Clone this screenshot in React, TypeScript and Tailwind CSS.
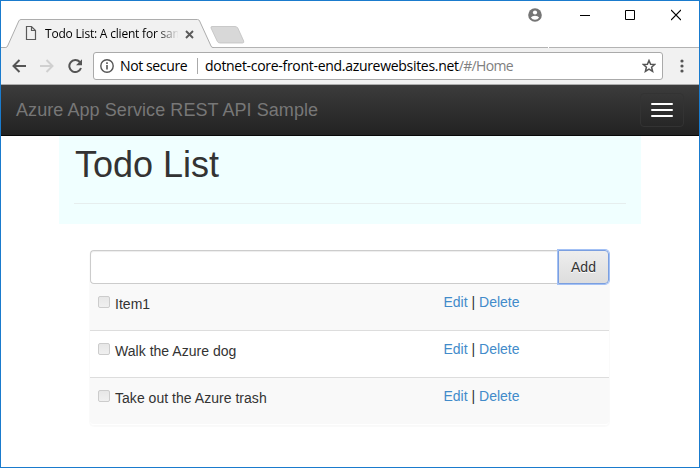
import React from "react";

const items = ["Item1", "Walk the Azure dog", "Take out the Azure trash"];

function TitleBar() {
  return (
    <div className="relative flex h-[47px] bg-white">
      <div className="absolute inset-x-0 bottom-0 h-px bg-[#b3b3b3]" />
      <div className="absolute bottom-0 left-[547px] h-px w-px bg-white" />
      <div className="relative mt-[17px] flex h-[30px] w-[213px] shrink-0 items-center">
        <svg className="absolute inset-0" width="213" height="30" viewBox="0 0 213 30">
          <path d="M0 29.5H4.5Q6 29.5 6.6 28L17.8 3Q18.5 1.5 20 1.5H196.5Q198 1.5 198.6 3L210 28Q210.5 29.5 212 29.5H213V30H0Z" fill="#f1f1f1" />
          <path d="M0 29.5H4.5Q6 29.5 6.6 28L17.8 3Q18.5 1.5 20 1.5H196.5Q198 1.5 198.6 3L210 28Q210.5 29.5 212 29.5H213" fill="none" stroke="#adadad" />
        </svg>
        <svg className="relative ml-[24px] shrink-0" width="12" height="16" viewBox="0 0 12 16" fill="none" stroke="#5a5a5a" strokeWidth="1.2">
          <path d="M1.5 1.5H6.5L10.5 5.5V14.5H1.5ZM6.5 1.5V5.5H10.5" />
        </svg>
        <span className="relative ml-2 mt-[2px] w-[133px] whitespace-nowrap font-['Open_Sans',sans-serif] text-[12px] leading-4 tracking-[-0.2px] text-black [mask-image:linear-gradient(to_right,black_112px,transparent_134px)]">
          Todo List: A client for sam
        </span>
        <svg className="relative ml-[7px] mt-[2px] shrink-0" width="9" height="9" viewBox="0 0 9 9" stroke="#5a5a5a" strokeWidth="1.9">
          <path d="M1 1L8 8M8 1L1 8" />
        </svg>
      </div>
      <svg className="mt-[24px] -ml-[5px] shrink-0" width="36" height="20" viewBox="0 0 36 20">
        <path d="M3 1.5H26Q28 1.5 28.8 3L34.7 16Q35.3 18 33.5 18H11Q9 18 8.2 16.2L2 3Q1.6 1.5 3 1.5Z" fill="#d8d8d8" stroke="#c0c0c0" strokeWidth=".8" />
      </svg>
      <div className="ml-auto flex pt-[7px]">
        <svg width="14" height="14" viewBox="0 0 14 14">
          <circle cx="7" cy="7" r="6.8" fill="#757575" />
          <circle cx="7" cy="4.5" r="2.1" fill="white" />
          <path d="M2.9 9.5Q4 7.8 7 7.8T11.1 9.5Q9.7 11.8 7 11.8T2.9 9.5" fill="white" />
        </svg>
        <svg className="ml-[38px]" width="10" height="14"><path d="M0 7.5H10" stroke="black" /></svg>
        <svg className="ml-[35px]" width="10" height="14"><path d="M.5 2.5H9.5V11.5H.5Z" fill="none" stroke="black" /></svg>
        <svg className="ml-[36px] mr-[18px]" width="10" height="14"><path d="M0 2L10 12M10 2L0 12" stroke="black" strokeWidth="1.2" /></svg>
      </div>
    </div>
  );
}

function Toolbar() {
  return (
    <div className="flex h-[37px] items-center border-b border-[#adadad] bg-[#f1f1f1] font-['Open_Sans',sans-serif]">
      <svg className="ml-[11px]" width="15" height="14" viewBox="0 0 15 14" fill="none" stroke="#555" strokeWidth="2"><path d="M14 7H1.5M7.5 1L1.5 7L7.5 13" /></svg>
      <svg className="ml-[13px]" width="15" height="14" viewBox="0 0 15 14" fill="none" stroke="#d0d0d0" strokeWidth="2"><path d="M0 7H12.5M6.5 1L12.5 7L6.5 13" /></svg>
      <svg className="ml-[13px]" width="15" height="14" viewBox="0 0 15 14"><path d="M11.8 3A6 6 0 1 0 13 9" fill="none" stroke="#555" strokeWidth="2" /><path d="M14 .2V6.2H8Z" fill="#555" /></svg>
      <div className="ml-[10px] flex h-[28px] w-[570px] items-center rounded-[3px] border border-[#aaa] bg-white text-[14px] leading-5 text-black">
        <svg className="ml-[6px]" width="14" height="14" viewBox="0 0 14 14" fill="none" stroke="#555"><circle cx="7" cy="7" r="6.2" strokeWidth="1.4" /><path d="M7 6V10.5M7 3.3V5" strokeWidth="1.6" /></svg>
        <span className="ml-[6px] w-[68px] whitespace-nowrap tracking-[-0.38px]">Not secure</span>
        <span className="ml-[9px] h-4 w-px bg-[#aaa]" />
        <span className="ml-[7px] whitespace-nowrap tracking-[-0.3px]">dotnet-core-front-end.azurewebsites.net<span className="tracking-[-0.65px] text-[#808080]">/#/Home</span></span>
        <svg className="ml-auto mr-[6px]" width="14" height="14" viewBox="0 0 14 14" fill="none" stroke="#555" strokeWidth="1.5"><path d="M7 1.5L8.6 5.2L12.7 5.5L9.6 8.2L10.6 12.3L7 10.1L3.4 12.3L4.4 8.2L1.3 5.5L5.4 5.2Z" /></svg>
      </div>
      <svg className="ml-[16.5px]" width="4" height="14" viewBox="0 0 4 14" fill="#555"><circle cx="2" cy="2" r="1.6" /><circle cx="2" cy="7" r="1.6" /><circle cx="2" cy="12" r="1.6" /></svg>
    </div>
  );
}

export default function App() {
  return (
    <div className="h-[468px] w-[700px] overflow-hidden border border-[#1a7bcd] bg-white font-['Liberation_Sans',Arial,sans-serif]">
      <TitleBar />
      <Toolbar />
      <nav className="flex h-[51px] items-center justify-between border-b border-[#080808] bg-linear-to-b from-[#3c3c3c] to-[#222] px-[15px]">
        <span className="text-[18px] leading-5 tracking-[0.07px] text-[#777]">Azure App Service REST API Sample</span>
        <button className="flex h-[34px] w-[44px] flex-col items-center justify-center gap-1 rounded-[4px] border border-[#333]">
          <span className="h-[2px] w-[22px] rounded-[1px] bg-white" />
          <span className="h-[2px] w-[22px] rounded-[1px] bg-white" />
          <span className="h-[2px] w-[22px] rounded-[1px] bg-white" />
        </button>
      </nav>
      <header className="ml-[58px] h-[88px] w-[582px] bg-[#f0ffff] px-[15px] pt-[9px]">
        <h1 className="h-[59px] border-b border-[#e6eeee] pl-px text-[36px] leading-[39.6px] font-normal text-[#333]">Todo List</h1>
      </header>
      <main className="mt-[26px] ml-[89px] w-[519px] rounded-[4px] text-[14px] leading-5 text-[#333] shadow-[0_1px_1px_1px_rgba(0,0,0,0.025)]">
        <div className="flex h-[34px]">
          <input className="min-w-0 flex-1 rounded-l-[4px] border border-r-0 border-[#ccc] bg-white shadow-[inset_0_1px_1px_rgba(0,0,0,0.075)] outline-none" />
          <button className="w-[51px] rounded-r-[4px] border border-[#7b9fe0] bg-linear-to-b from-[#eee] to-[#ddd] text-center shadow-[0_0_0_1px_#a3c1f5] [text-shadow:0_1px_0_#fff]">Add</button>
        </div>
        {items.map((item) => (
          <div key={item} className="flex h-[47px] items-start border-b border-[#ddd] px-2 pt-2 odd:bg-white even:bg-[#f9f9f9] last:rounded-b-[4px] last:border-white">
            <span className="mt-[4px] h-[12px] w-[12px] shrink-0 rounded-[2px] border border-[#ccc] bg-linear-to-b from-[#e7e7e7] to-[#f0f0f0]" />
            <span className="mt-[2px] ml-[5px] w-[328.5px] tracking-[0.03px]">{item}</span>
            <span className="whitespace-nowrap"><a className="text-[#428bca]">Edit</a> | <a className="text-[#428bca]">Delete</a></span>
          </div>
        ))}
      </main>
    </div>
  );
}
